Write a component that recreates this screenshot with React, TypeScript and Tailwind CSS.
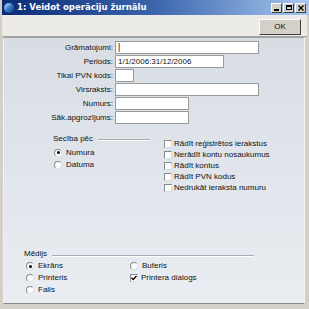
import React from "react";

const Input = ({ w, children }: { w: string; children?: React.ReactNode }) => (
  <div className={`${w} h-[13px] bg-white border border-[#9a9a9a] flex items-center pl-[2px] text-[8px] leading-none`}>{children}</div>
);

const Radio = ({ on }: { on?: boolean }) => (
  <div className="w-[8px] h-[8px] rounded-full bg-white border border-t-[#8a8a8a] border-l-[#8a8a8a] border-b-[#e0e0e0] border-r-[#e0e0e0] flex items-center justify-center shrink-0">
    {on && <div className="w-[3px] h-[3px] rounded-full bg-black" />}
  </div>
);

const Check = ({ on }: { on?: boolean }) => (
  <div className="w-[8px] h-[8px] bg-white border border-t-[#8a8a8a] border-l-[#8a8a8a] border-b-[#dcdcdc] border-r-[#dcdcdc] flex items-center justify-center shrink-0">
    {on && (
      <svg width="6" height="6" viewBox="0 0 6 6">
        <path d="M0.5 2.8 L2.2 4.5 L5.5 1" stroke="black" strokeWidth="1.3" fill="none" />
      </svg>
    )}
  </div>
);

const rows: [string, string, React.ReactNode?][] = [
  ["Grāmatojumi:", "w-[144px]", <span className="text-[9px] -mt-[1px]">|</span>],
  ["Periods:", "w-[109px]", "1/1/2006:31/12/2006"],
  ["Tikai PVN kods:", "w-[19px]"],
  ["Virsraksts:", "w-[144px]"],
  ["Numurs:", "w-[74px]"],
  ["Sāk.apgrozījums:", "w-[74px]"],
];

export default function App() {
  return (
    <div className="w-[309px] h-[309px] flex flex-col bg-[#d4d0c8] font-['Liberation_Sans',sans-serif] text-[8px] leading-none text-[#111] overflow-hidden">
      <div className="h-[15px] ml-[2px] flex items-center bg-gradient-to-r from-[#0a2a75] via-[#3d66ad] to-[#a9c9ef]">
        <div className="w-[10px] h-[10px] ml-[2px] rounded-full bg-gradient-to-br from-[#cfe6ff] via-[#3a78c8] to-[#123a7a]" />
        <span className="ml-[3px] text-white font-bold text-[8.5px] font-['DejaVu_Sans',sans-serif]">1: Veidot operāciju žurnālu</span>
        <div className="ml-auto mr-[3px] flex gap-[1px]">
          {["min", "max", "close"].map((k) => (
            <div key={k} className="w-[11px] h-[10px] bg-[#d4d0c8] border border-t-white border-l-white border-b-[#404040] border-r-[#404040] flex items-center justify-center">
              {k === "min" && <div className="w-[5px] h-[2px] bg-black mt-[4px]" />}
              {k === "max" && <div className="w-[6px] h-[5px] border border-black border-t-2" />}
              {k === "close" && (
                <svg width="6" height="6" viewBox="0 0 6 6">
                  <path d="M0.5 0.5 L5.5 5.5 M5.5 0.5 L0.5 5.5" stroke="black" strokeWidth="1.4" />
                </svg>
              )}
            </div>
          ))}
        </div>
      </div>
      <div className="h-[22px] mx-[2px] bg-[#ecebe8] flex items-center justify-end pr-[6px] border-b border-[#a8a8a8]">
        <div className="w-[42px] h-[16px] bg-[#d4d0c8] border border-t-white border-l-white border-b-[#404040] border-r-[#404040] flex items-center justify-center text-[8px] mt-[2px]">OK</div>
      </div>
      <div className="flex-1 ml-[3px] mr-[4px] mb-[5px] border border-t-[#a0a0a0] border-l-[#f4f4f4] border-r-[#f4f4f4] border-b-[#8a8a8a] bg-gradient-to-b from-[#d8dde4] to-[#eaeef3] flex flex-col">
        <div className="pt-[3px] flex flex-col gap-[1px]">
          {rows.map(([label, w, v]) => (
            <div key={label} className="flex items-center h-[13px]">
              <div className="w-[111px] text-right pr-[2px]">{label}</div>
              <Input w={w}>{v}</Input>
            </div>
          ))}
        </div>
        <div className="flex mt-[10px]">
          <div className="ml-[49px] w-[97px] flex flex-col">
            <div className="flex items-center h-[10px]">
              <span>Secība pēc</span>
              <div className="flex-1 ml-[5px] h-[2px] border-t border-t-[#a8adb5] border-b border-b-white mt-[2px]" />
            </div>
            <div className="flex items-center gap-[4px] ml-[1px] mt-[3px] h-[11px]"><Radio on /><span>Numura</span></div>
            <div className="flex items-center gap-[4px] ml-[1px] mt-[1px] h-[11px]"><Radio /><span>Datuma</span></div>
          </div>
          <div className="ml-[14px] flex flex-col mt-[4px]">
            {["Rādīt reģistrētos ierakstus", "Nerādīt kontu nosaukumus", "Rādīt kontus", "Rādīt PVN kodus", "Nedrukāt ieraksta numuru"].map((t) => (
              <div key={t} className="flex items-center gap-[2px] h-[11px]"><Check /><span>{t}</span></div>
            ))}
          </div>
        </div>
        <div className="mt-[56px] ml-[20px] w-[230px] flex items-center h-[10px]">
          <span>Mēdijs</span>
          <div className="flex-1 ml-[5px] h-[2px] border-t border-t-[#a8adb5] border-b border-b-white mt-[3px]" />
        </div>
        <div className="flex ml-[22px] mt-[1px]">
          <div className="w-[104px] flex flex-col">
            <div className="flex items-center gap-[4px] h-[12px]"><Radio on /><span>Ekrāns</span></div>
            <div className="flex items-center gap-[4px] h-[12px]"><Radio /><span>Printeris</span></div>
            <div className="flex items-center gap-[4px] h-[12px]"><Radio /><span>Fails</span></div>
          </div>
          <div className="flex flex-col">
            <div className="flex items-center gap-[4px] h-[12px]"><Radio /><span>Buferis</span></div>
            <div className="flex items-center gap-[3px] h-[11px]"><Check on /><span>Printera dialogs</span></div>
          </div>
        </div>
      </div>
    </div>
  );
}
